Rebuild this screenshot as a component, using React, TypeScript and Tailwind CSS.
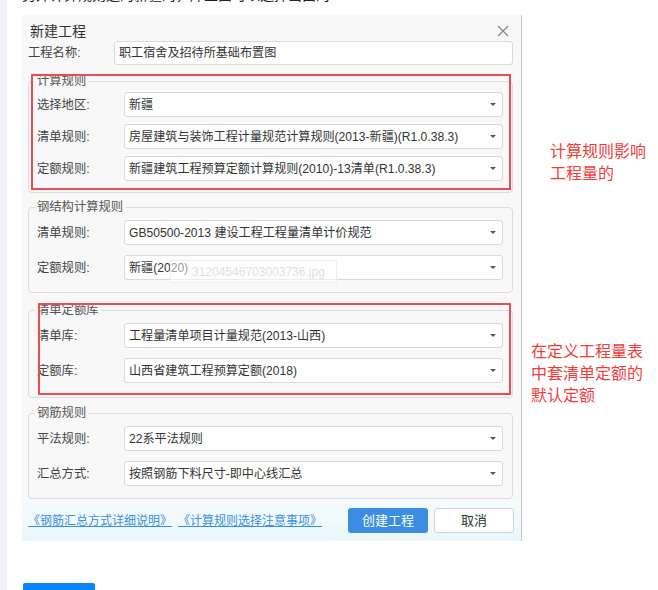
import React from "react";

const font = "font-['Liberation_Sans','Noto_Sans_CJK_SC',sans-serif]";

function Select({ value }: { value: string }) {
  return (
    <div className="flex h-[25px] flex-1 items-center justify-between rounded-[3px] border border-[#d9d9d9] bg-white pl-[4px] pr-[6px]">
      <span className="whitespace-nowrap text-[12.1px] leading-[16px] text-[#333]">{value}</span>
      <span className="h-0 w-0 shrink-0 border-x-[3px] border-t-[3px] border-x-transparent border-t-[#555]" />
    </div>
  );
}

function Row({ label, value }: { label: string; value: string }) {
  return (
    <div className="flex h-[25px] items-center">
      <span className="w-[87px] shrink-0 text-[12.3px] leading-[16px] text-[#444]">{label}</span>
      <Select value={value} />
    </div>
  );
}

function Group({
  legend,
  rows,
  className,
}: {
  legend: string;
  rows: [string, string][];
  className: string;
}) {
  return (
    <div className={`relative rounded-[4px] border border-[#dcdcdc] pl-[8px] pr-[9px] ${className}`}>
      {/* legend sits over the top border */}
      <span className="absolute -top-[9px] left-[6px] bg-[#f8f8f8] px-[2px] text-[12.3px] leading-[16px] text-[#555]">
        {legend}
      </span>
      {rows.map(([l, v]) => (
        <Row key={l} label={l} value={v} />
      ))}
    </div>
  );
}

export default function App() {
  return (
    <div className={`relative flex h-[590px] w-[658px] overflow-hidden bg-white ${font}`}>
      <div className="h-full w-[7px] shrink-0 bg-[#eef1f6]" />

      <div className="ml-[15px] flex w-[500px] shrink-0 flex-col">
        {/* cut-off line of text above the screenshot */}
        <div className="h-[5px] shrink-0 overflow-hidden">
          <div className="-mt-[15px] whitespace-nowrap text-[14px] leading-[20px] text-[#222]">
            另外计算规则选的新疆的，库里面可以选择山西的
          </div>
        </div>

        {/* dialog */}
        <div className="relative mt-[10px] flex h-[526px] shrink-0 flex-col border-r border-[#c8c8c8] bg-[#f8f8f8]">
          <div className="relative h-[26px] pl-[8px]">
            <div className="mt-[6px] text-[14px] leading-[20px] text-[#333]">新建工程</div>
            <svg className="absolute right-[12px] top-[10px]" width="12" height="12" viewBox="0 0 12 12">
              <path d="M1 1 L11 11 M11 1 L1 11" stroke="#8a8a8a" strokeWidth="1.3" />
            </svg>
          </div>

          <div className="flex flex-col pl-[6px] pr-[8px]">
            <div className="flex h-[24px] items-center">
              <span className="w-[86px] shrink-0 text-[12.3px] leading-[16px] text-[#444]">工程名称:</span>
              <div className="flex h-full flex-1 items-center rounded-[3px] border border-[#d9d9d9] bg-white px-[4px] text-[12.1px] leading-[16px] text-[#333]">
                职工宿舍及招待所基础布置图
              </div>
            </div>

            <Group
              legend="计算规则"
              className="mt-[16px] flex flex-col gap-[7px] pb-[11px] pt-[10px]"
              rows={[
                ["选择地区:", "新疆"],
                ["清单规则:", "房屋建筑与装饰工程计量规范计算规则(2013-新疆)(R1.0.38.3)"],
                ["定额规则:", "新疆建筑工程预算定额计算规则(2010)-13清单(R1.0.38.3)"],
              ]}
            />
            <Group
              legend="钢结构计算规则"
              className="mt-[14px] flex flex-col gap-[10px] pb-[12px] pt-[12px]"
              rows={[
                ["清单规则:", "GB50500-2013 建设工程工程量清单计价规范"],
                ["定额规则:", "新疆(2020)"],
              ]}
            />
            <Group
              legend="清单定额库"
              className="mt-[17px] flex flex-col gap-[10px] pb-[14px] pt-[12px]"
              rows={[
                ["清单库:", "工程量清单项目计量规范(2013-山西)"],
                ["定额库:", "山西省建筑工程预算定额(2018)"],
              ]}
            />
            <Group
              legend="钢筋规则"
              className="mt-[15px] flex flex-col gap-[10px] pb-[12px] pt-[12px]"
              rows={[
                ["平法规则:", "22系平法规则"],
                ["汇总方式:", "按照钢筋下料尺寸-即中心线汇总"],
              ]}
            />
          </div>

          {/* footer */}
          <div className="mt-auto flex h-[41px] items-center bg-gradient-to-b from-[#f6fbfc] to-[#eaf7fa] pl-[6px] pr-[7px]">
            <a className="text-[12px] leading-[16px] text-[#3d8fe0] underline">《钢筋汇总方式详细说明》</a>
            <a className="ml-[6px] text-[12px] leading-[16px] text-[#3d8fe0] underline">《计算规则选择注意事项》</a>
            <button className="ml-auto flex h-[25px] w-[80px] items-center justify-center rounded-[3px] bg-[#3a8de3] text-[13px] text-white">
              创建工程
            </button>
            <button className="ml-[6px] flex h-[25px] w-[80px] items-center justify-center rounded-[3px] border border-[#d3d3d3] bg-white text-[13px] text-[#333]">
              取消
            </button>
          </div>

          {/* red annotation frames */}
          <div className="pointer-events-none absolute left-[9px] top-[59px] h-[116px] w-[480px] border-2 border-[#ec4b50]" />
          <div className="pointer-events-none absolute left-[16px] top-[288px] h-[92px] w-[473px] border-2 border-[#ec4b50]" />
        </div>

        <div className="ml-[1px] mt-[42px] h-[7px] w-[72px] shrink-0 rounded-t-[2px] bg-[#0a84ff]" />
      </div>

      {/* side notes */}
      <div className="flex flex-col font-['Noto_Sans_CJK_SC',sans-serif] text-[16px] leading-[22px] text-[#f23c3c]">
        <div className="ml-[28px] mt-[139px]">
          计算规则影响
          <br />
          工程量的
        </div>
        <div className="ml-[9px] mt-[156px]">
          在定义工程量表
          <br />
          中套清单定额的
          <br />
          默认定额
        </div>
      </div>

      {/* faint watermark over the dialog */}
      <div className="pointer-events-none absolute left-[170px] top-[260px] flex h-[23px] w-[167px] items-center border border-[#efefef] bg-white/50 pl-[21px] text-[12px] text-[#dde1e6]">
        31204546703003736.jpg
      </div>
    </div>
  );
}
